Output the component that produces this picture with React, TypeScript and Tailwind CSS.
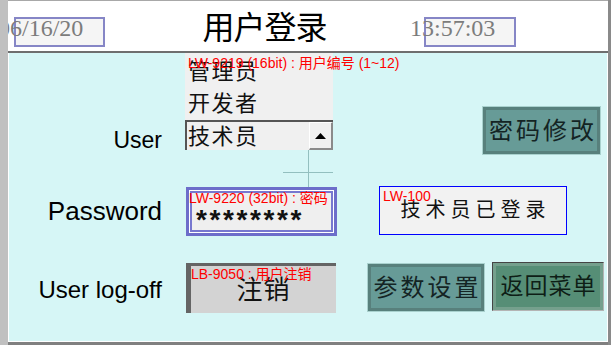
import React from 'react';

const cjk = "font-['Noto_Sans_CJK_SC',sans-serif]";
const latin = "font-['Liberation_Sans',sans-serif]";

function Tag({ children, pos }: { children: React.ReactNode; pos: string }) {
  return (
    <span
      className={`absolute z-10 whitespace-nowrap text-[14px] leading-[14px] text-[#ff0000] font-['Liberation_Sans','Noto_Sans_CJK_SC',sans-serif] ${pos}`}
    >
      {children}
    </span>
  );
}

function TealButton({ label, size }: { label: string; size: string }) {
  return (
    <div className={`border border-[#a9d1ce] bg-[#58807c] p-[3px] ${size}`}>
      <div className="h-full bg-[#679b97] flex items-center justify-center">
        <span className={`-mt-[4px] -mr-[3px] whitespace-nowrap text-[24px] leading-none tracking-[3px] text-[#142424] ${cjk}`}>
          {label}
        </span>
      </div>
    </div>
  );
}

function Header() {
  return (
    <header className="h-[51px] border-t border-[#a8a8a8] bg-white flex">
      <div className="ml-[6px] mt-[16px] w-[91px] h-[30px] border-2 border-[#8686c6] bg-[#f5f5f5]">
        <div className="-ml-[18px] -mt-[4px] text-[24px] leading-[26px] text-[#7c7c7c] whitespace-nowrap font-['Liberation_Serif',serif]">
          06/16/20
        </div>
      </div>
      <div className="flex-1 flex items-center justify-center">
        <span className={`text-[32px] leading-none -mt-[2px] -tracking-[1px] text-black ${cjk}`}>用户登录</span>
      </div>
      <div className="mr-[92px] mt-[16px] w-[92px] h-[30px] border-2 border-[#8686c6] bg-[#f5f5f5]">
        <div className="-ml-[16px] -mt-[4px] text-[24px] leading-[26px] text-[#7c7c7c] whitespace-nowrap font-['Liberation_Serif',serif]">
          13:57:03
        </div>
      </div>
    </header>
  );
}

function UserRow() {
  return (
    <div className="flex h-[102px]">
      <div className={`w-[153px] flex flex-col justify-end items-end text-[23px] leading-[30px] text-black ${latin}`}>
        User
      </div>
      <div className="ml-[23px] w-[148px] relative flex flex-col">
        <Tag pos="left-[3px] top-[3px]">LW-9219 (16bit) : 用户编号 (1~12)</Tag>
        <div className={`h-[67px] bg-[#f0f0f0] pl-[3px] text-[22px] leading-[32px] tracking-[1.5px] text-[#111] ${cjk}`}>
          <div>管理员</div>
          <div>开发者</div>
        </div>
        <div className="h-[30px] border-t-2 border-l-2 border-[#555] bg-[#f0f0f0] flex">
          <div className={`flex-1 pl-[1px] text-[22px] leading-[24px] tracking-[1.5px] text-[#111] ${cjk}`}>技术员</div>
          <div className="w-[24px] h-[28px] border-t border-l border-white border-r-2 border-b-2 border-r-[#8a8a8a] border-b-[#8a8a8a] bg-[#f0f0f0] flex items-center justify-center">
            <svg width="11" height="6" viewBox="0 0 11 6">
              <polygon points="5.5,0 11,6 0,6" fill="#000" />
            </svg>
          </div>
        </div>
        <div className="absolute left-[123px] top-[97px] w-px h-[37px] bg-[#93bfbf]" />
        <div className="absolute left-[98px] top-[119px] w-[50px] h-px bg-[#93bfbf]" />
      </div>
      <div className="ml-[149px] self-end">
        <TealButton label="密码修改" size="w-[119px] h-[49px]" />
      </div>
    </div>
  );
}

function PasswordRow() {
  return (
    <div className="mt-[31px] flex h-[50px]">
      <div className={`w-[153px] flex items-center justify-end text-[26px] leading-none text-black ${latin}`}>
        Password
      </div>
      <div className="ml-[24px] mt-[1px] w-[151px] h-[49px] relative border-[3px] border-[#6d6dca]">
        <Tag pos="left-0 top-[1px]">LW-9220 (32bit) : 密码</Tag>
        <div className="h-full border border-white">
          <div className="h-full border-2 border-[#7777cf] bg-[#efefef] flex items-center pl-[4px]">
            <span className={`mt-[16px] text-[28px] leading-none font-bold tracking-[2.6px] text-[#111] ${latin}`}>********</span>
          </div>
        </div>
      </div>
      <div className="ml-[42px] w-[188px] h-[49px] relative border border-[#0000ff] bg-[#f2f2f2] flex items-center justify-center">
        <Tag pos="left-[3px] top-[2px]">LW-100</Tag>
        <span className={`-mt-[3px] pl-[5px] text-[20px] leading-none tracking-[5px] text-[#111] ${cjk}`}>技术员已登录</span>
      </div>
    </div>
  );
}

function LogoffRow() {
  return (
    <div className="mt-[26px] flex h-[51px]">
      <div className={`w-[153px] pt-[5px] flex items-center justify-end text-[24px] leading-none text-black ${latin}`}>
        User log-off
      </div>
      <div className="ml-[24px] mt-[1px] w-[150px] h-[50px] relative border-l-[5px] border-t-[3px] border-[#646464] bg-[#d3d3d3] flex items-center justify-center">
        <Tag pos="left-0 top-[1px]">LB-9050 : 用户注销</Tag>
        <span className={`-mt-[4px] text-[26px] leading-none tracking-[1px] text-[#111] ${cjk}`}>注销</span>
      </div>
      <div className="ml-[31px] mt-[1px]">
        <TealButton label="参数设置" size="w-[118px] h-[49px]" />
      </div>
      <div className="ml-[7px] w-[112px] h-[49px] border border-t-[#454545] border-l-[#454545] border-r-[#b4b4b4] border-b-[#b4b4b4] bg-[#75a08d] p-[3px]">
        <div className="h-full bg-[#568e76] flex items-center justify-center">
          <span className={`-mt-[5px] -mr-[1px] whitespace-nowrap text-[23px] leading-none tracking-[1px] text-[#0e1e16] ${cjk}`}>
            返回菜单
          </span>
        </div>
      </div>
    </div>
  );
}

export default function App() {
  return (
    <div className="w-[611px] h-[345px] flex bg-[#808080] overflow-hidden">
      <div className="w-[8px] h-full bg-[#c0c0c0]" />
      <div className="w-[600px] flex flex-col overflow-hidden">
        <Header />
        <div className="h-[2px] bg-[#6e6e6e]" />
        <main className="h-[289px] bg-[#d6f6f6] border-l border-r border-b border-white flex flex-col">
          <UserRow />
          <PasswordRow />
          <LogoffRow />
        </main>
      </div>
      <div className="w-[3px] h-full bg-[#8a8a8a]" />
    </div>
  );
}
